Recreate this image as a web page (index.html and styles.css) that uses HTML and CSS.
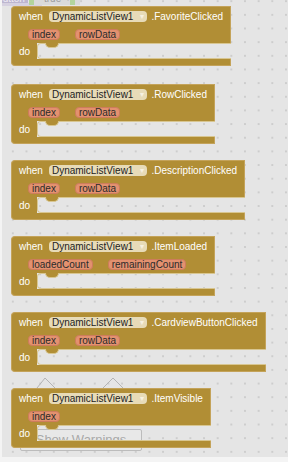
FILE: index.html
```html
<!DOCTYPE html>
<html>
<head>
<meta charset="utf-8">
<title>Blocks</title>
<link rel="stylesheet" href="styles.css">
</head>
<body>
	<div class="ws">
		<div class="ghost">
			<span class="ghost_btn">Button</span>
			<span class="ghost_band"></span>
			<span class="ghost_true"><i class="g_edge"></i><span class="g_txt">true</span><span class="g_arr">▾</span><i class="g_edge"></i></span>
		</div>

		<div class="warn_btn">Show Warnings</div>
		<svg class="carets" width="286" height="457">
			<polyline points="35,388 43,378 53,388" />
			<polyline points="101,388 111,378 121,388" />
		</svg>

		<div class="stack">
			<div class="block first">
				<div class="head">
					<div class="row">
						<span class="kw">when</span>
						<span class="dd">DynamicListView1<span class="arr">▾</span></span>
						<span class="ev">.FavoriteClicked</span>
					</div>
					<div class="row params">
						<span class="param">index</span>
						<span class="param">rowData</span>
					</div>
				</div>
				<div class="body">
					<div class="arm"><span class="kw">do</span></div>
					<div class="mouth"></div>
				</div>
				<div class="foot"></div>
			</div>

			<div class="block">
				<div class="head">
					<div class="row">
						<span class="kw">when</span>
						<span class="dd">DynamicListView1<span class="arr">▾</span></span>
						<span class="ev">.RowClicked</span>
					</div>
					<div class="row params">
						<span class="param">index</span>
						<span class="param">rowData</span>
					</div>
				</div>
				<div class="body">
					<div class="arm"><span class="kw">do</span></div>
					<div class="mouth"></div>
				</div>
				<div class="foot"></div>
			</div>

			<div class="block">
				<div class="head">
					<div class="row">
						<span class="kw">when</span>
						<span class="dd">DynamicListView1<span class="arr">▾</span></span>
						<span class="ev">.DescriptionClicked</span>
					</div>
					<div class="row params">
						<span class="param">index</span>
						<span class="param">rowData</span>
					</div>
				</div>
				<div class="body">
					<div class="arm"><span class="kw">do</span></div>
					<div class="mouth"></div>
				</div>
				<div class="foot"></div>
			</div>

			<div class="block">
				<div class="head">
					<div class="row">
						<span class="kw">when</span>
						<span class="dd">DynamicListView1<span class="arr">▾</span></span>
						<span class="ev">.ItemLoaded</span>
					</div>
					<div class="row params">
						<span class="param">loadedCount</span>
						<span class="param">remainingCount</span>
					</div>
				</div>
				<div class="body">
					<div class="arm"><span class="kw">do</span></div>
					<div class="mouth"></div>
				</div>
				<div class="foot"></div>
			</div>

			<div class="block">
				<div class="head">
					<div class="row">
						<span class="kw">when</span>
						<span class="dd">DynamicListView1<span class="arr">▾</span></span>
						<span class="ev">.CardviewButtonClicked</span>
					</div>
					<div class="row params">
						<span class="param">index</span>
						<span class="param">rowData</span>
					</div>
				</div>
				<div class="body">
					<div class="arm"><span class="kw">do</span></div>
					<div class="mouth"></div>
				</div>
				<div class="foot"></div>
			</div>

			<div class="block">
				<div class="head">
					<div class="row">
						<span class="kw">when</span>
						<span class="dd">DynamicListView1<span class="arr">▾</span></span>
						<span class="ev">.ItemVisible</span>
					</div>
					<div class="row params">
						<span class="param">index</span>
					</div>
				</div>
				<div class="body">
					<div class="arm"><span class="kw">do</span></div>
					<div class="mouth"></div>
				</div>
				<div class="foot"></div>
			</div>
		</div>
	</div>
</body>
</html>
```

FILE: styles.css
```css
*{ padding:0; margin:0; box-sizing:border-box; }
body{ background:#f4f4f4; font-family:"Liberation Sans", Arial, sans-serif; font-size:10px; width:288px; height:462px; overflow:hidden; }

.ws{ position:relative; margin-left:2px; width:286px; height:457px; overflow:hidden;
	background-color:#e5e5e5;
	background-image:radial-gradient(circle, #cdcdcd 0.9px, transparent 1.1px);
	background-size:13.67px 13.67px; background-position:4px 8px; }

/* faded blocks cut off at the top */
.ghost{ position:absolute; top:0; left:0; width:100px; height:6px; overflow:hidden; z-index:1; }
.ghost_btn{ position:absolute; left:-9px; top:-6px; height:9px; padding:0 3px; background:#bdb6cf; color:#efecf5; line-height:10px; }
.ghost_band{ position:absolute; left:0; top:3px; width:40px; height:3px; background:#d6d1e0; }
.ghost_true{ position:absolute; left:27px; top:-6px; height:11px; width:51px; display:flex; background:#dadada; color:#9d9d9d; line-height:10px; }
.g_edge{ width:5px; background:#b3d49c; }
.g_txt{ margin-left:10px; }
.g_arr{ margin-left:5px; font-size:8px; }

.warn_btn{ position:absolute; left:18px; top:429px; width:122px; height:22px; border:1px solid #bcbcbc; border-radius:2px; background:#e8e8e8; color:#a9a9a9; font-size:13px; line-height:20px; text-align:center; z-index:1; }
.carets{ position:absolute; left:0; top:0; z-index:1; }
.carets polyline{ fill:none; stroke:#b4b4b4; stroke-width:1; }

.stack{ position:relative; z-index:2; display:flex; flex-direction:column; align-items:flex-start; gap:16px; padding:6px 0 0 9px; }
.block.first{ margin-bottom:2px; }
.block{ display:flex; flex-direction:column; color:#fff; }

.head{ background:#b18e35; border:1px solid #c4a35a; border-bottom:none; border-radius:4px 0 0 0; padding:4px 7px 3px 7px; }
.row{ display:flex; align-items:center; height:11px; white-space:nowrap; }
.kw{ line-height:11px; }
.dd{ margin-left:6px; height:11px; display:flex; align-items:center; padding:0 3px; background:#e7dbb8; color:#222; border-radius:4px; line-height:11px; }
.arr{ margin-left:7px; font-size:8px; color:#f7f1e1; }
.ev{ margin-left:4px; line-height:11px; }
.params{ margin-top:7px; padding-left:9px; gap:15px; }
.param{ height:11px; padding:0 3px; background:#e3916f; border:1px solid #cd7c5c; border-radius:4px; color:#2b2b2b; line-height:9px; }

.body{ display:flex; height:16px; }
.arm{ width:26px; background:#b18e35; border-left:1px solid #c4a35a; padding-left:7px; display:flex; align-items:center; }
.mouth{ flex:1; position:relative; border:1px solid #d8c691; border-right:none; border-radius:4px 0 0 4px; }
.mouth:before{ content:""; position:absolute; left:7px; top:-1px; width:12px; height:4px; background:#b18e35; border:1px solid #d8c691; border-top:none; border-radius:0 0 6px 6px; }
.foot{ height:7px; background:#b18e35; border:1px solid #c4a35a; border-top:none; border-radius:0 0 0 4px; }
```
